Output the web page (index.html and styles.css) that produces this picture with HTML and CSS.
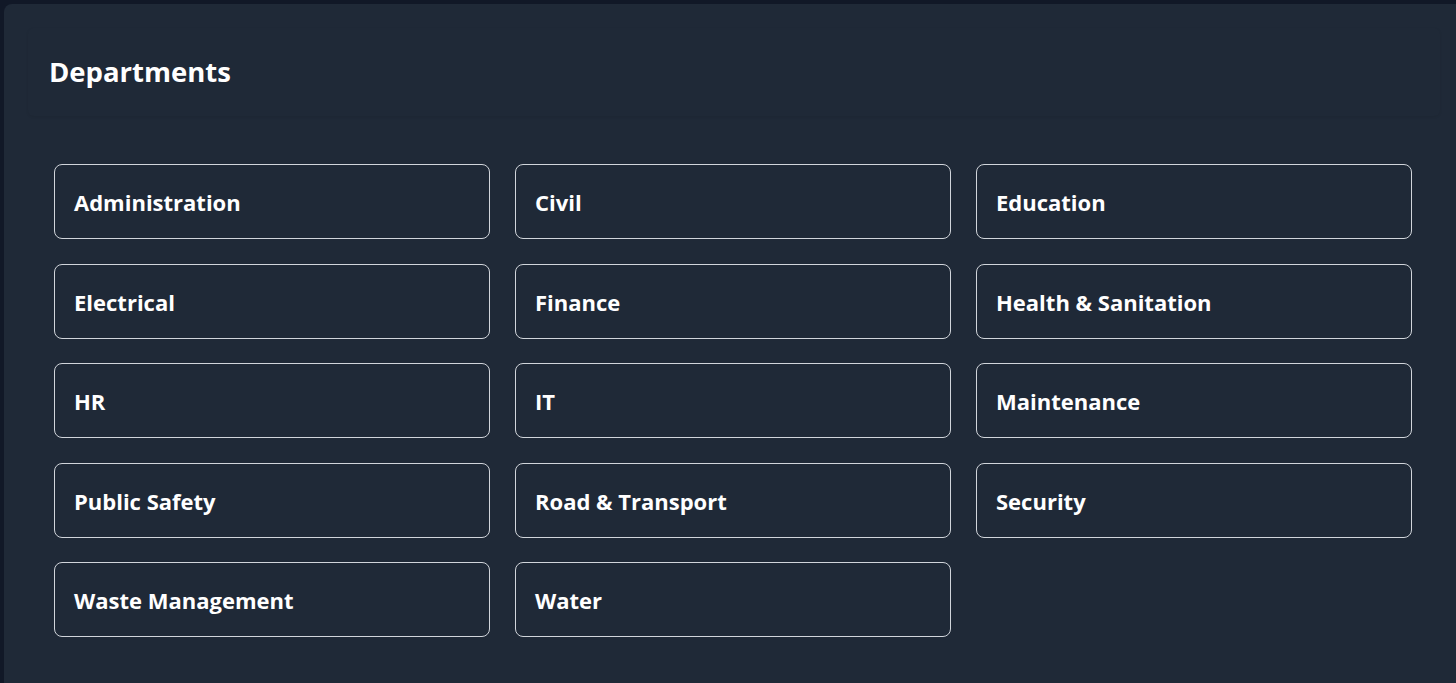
FILE: index.html
```html
<!DOCTYPE html>
<html>
<head>
<meta charset="utf-8">
<link rel="stylesheet" href="styles.css">
</head>
<body>
<div class="panel">
  <div class="header"><h1 class="title">Departments</h1></div>
  <div class="grid">
    <div class="card">Administration</div>
    <div class="card">Civil</div>
    <div class="card">Education</div>
    <div class="card">Electrical</div>
    <div class="card">Finance</div>
    <div class="card">Health &amp; Sanitation</div>
    <div class="card">HR</div>
    <div class="card">IT</div>
    <div class="card">Maintenance</div>
    <div class="card">Public Safety</div>
    <div class="card">Road &amp; Transport</div>
    <div class="card">Security</div>
    <div class="card">Waste Management</div>
    <div class="card">Water</div>
  </div>
</div>
</body>
</html>
```
FILE: styles.css
```css
html, body { margin: 0; height: 100%; }
body {
  background: #111827;
  padding: 4px 0 0 4px;
  box-sizing: border-box;
  overflow: hidden;
  font-family: "Open Sans", "Noto Sans", sans-serif;
  color: #ffffff;
}
.panel {
  width: 1460px;
  min-height: 700px;
  background: #1f2937;
  border-radius: 8px;
  padding: 24px;
  box-sizing: border-box;
}
.header {
  height: 88px;
  padding: 0 21px;
  display: flex;
  align-items: center;
  border-radius: 6px;
  box-shadow: 0 1px 3px rgba(0,0,0,0.08);
}
.title {
  margin: 0 0 2px;
  font-size: 27.5px;
  font-weight: 700;
}
.grid {
  margin: 48px 0 0 26px;
  width: 1358px;
  display: grid;
  grid-template-columns: repeat(3, 1fr);
  column-gap: 25px;
  row-gap: 24.5px;
}
.card {
  height: 75px;
  box-sizing: border-box;
  border: 1px solid #d1d5db;
  border-radius: 8px;
  padding: 1px 19px 0;
  display: flex;
  align-items: center;
  font-size: 22px;
  font-weight: 700;
}
```
